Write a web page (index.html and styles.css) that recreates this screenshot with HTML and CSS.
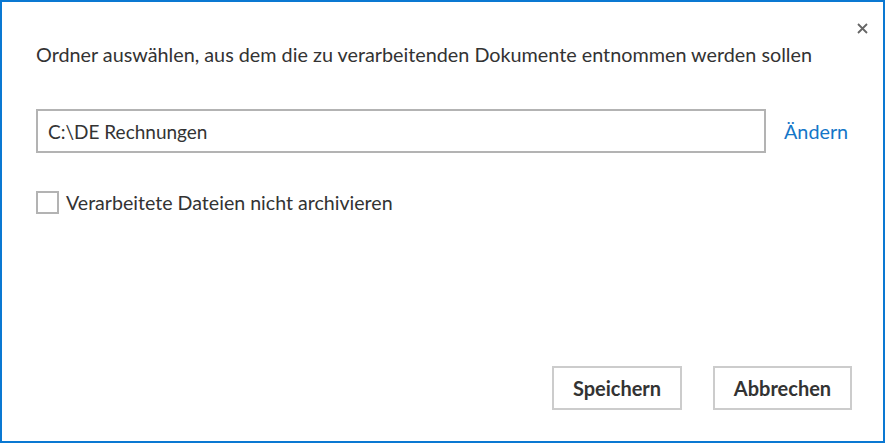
FILE: index.html
```html
<!DOCTYPE html>
<html lang="de">
<head>
<meta charset="utf-8">
<link rel="stylesheet" href="styles.css">
</head>
<body>
<div class="dialog">
  <div class="topbar">
    <button class="close" aria-label="Schließen">
      <svg width="11" height="11" viewBox="0 0 11 11"><path d="M1 1L10 10M10 1L1 10" stroke="#666" stroke-width="1.8" fill="none"/></svg>
    </button>
  </div>
  <p class="title">Ordner auswählen, aus dem die zu verarbeitenden Dokumente entnommen werden sollen</p>
  <div class="pathrow">
    <div class="pathbox">C:\DE Rechnungen</div>
    <a class="change" href="#">Ändern</a>
  </div>
  <label class="check">
    <span class="box"></span>
    <span class="label">Verarbeitete Dateien nicht archivieren</span>
  </label>
  <div class="spacer"></div>
  <div class="actions">
    <button class="btn btn-save">Speichern</button>
    <button class="btn btn-cancel">Abbrechen</button>
  </div>
</div>
</body>
</html>
```
FILE: styles.css
```css
html, body {
  margin: 0;
  padding: 0;
  background: #fff;
}
body {
  font-family: "Lato", "Open Sans", sans-serif;
  color: #333;
}
.dialog {
  box-sizing: border-box;
  width: 885px;
  height: 443px;
  border: 2px solid #0a78d2;
  display: flex;
  flex-direction: column;
  padding: 0 0 0 34px;
}
.topbar {
  display: flex;
  justify-content: flex-end;
  height: 36px;
  padding-right: 12px;
  padding-top: 17px;
  box-sizing: border-box;
}
.close {
  border: 0;
  background: none;
  padding: 0;
  width: 18px;
  height: 18px;
  display: flex;
  align-items: center;
  justify-content: center;
  cursor: pointer;
}
.title {
  margin: 0;
  font-size: 19.8px;
  line-height: 26px;
  margin-top: 3px;
  color: #333;
}
.pathrow {
  display: flex;
  align-items: center;
  margin-top: 42px;
  gap: 18px;
}
.pathbox {
  box-sizing: border-box;
  width: 730px;
  height: 44px;
  border: 2px solid #b3b3b3;
  padding: 0 10px;
  display: flex;
  align-items: center;
  font-size: 19px;
  color: #333;
}
.change {
  color: #1476c8;
  text-decoration: none;
  font-size: 19.8px;
}
.check {
  display: flex;
  align-items: center;
  margin-top: 38px;
  gap: 7px;
}
.box {
  box-sizing: border-box;
  width: 23px;
  height: 23px;
  border: 2px solid #b3b3b3;
  background: #fff;
}
.label {
  font-size: 19.6px;
  color: #333;
}
.spacer {
  flex: 1;
}
.actions {
  display: flex;
  justify-content: flex-end;
  gap: 31px;
  padding-right: 31px;
  margin-bottom: 31px;
}
.btn {
  box-sizing: border-box;
  height: 44px;
  border: 2px solid #cccccc;
  background: #fff;
  font-family: "Lato", "Open Sans", sans-serif;
  font-weight: 700;
  font-size: 20px;
  color: #333;
  padding: 0;
}
.btn-save { width: 130px; }
.btn-cancel { width: 139px; }
```
